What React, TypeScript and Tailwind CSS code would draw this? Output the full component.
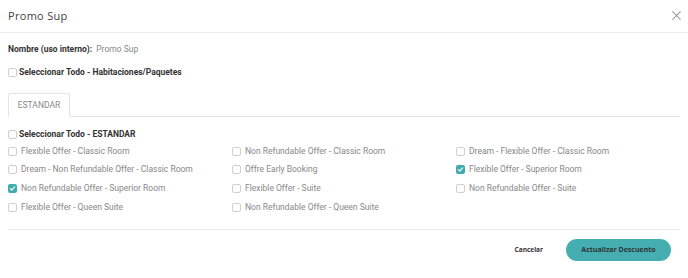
import React from 'react'

const rows: [string, boolean][] = [
  ['Flexible Offer - Classic Room', false],
  ['Non Refundable Offer - Classic Room', false],
  ['Dream - Flexible Offer - Classic Room', false],
  ['Dream - Non Refundable Offer - Classic Room', false],
  ['Offre Early Booking', false],
  ['Flexible Offer - Superior Room', true],
  ['Non Refundable Offer - Superior Room', true],
  ['Flexible Offer - Suite', false],
  ['Non Refundable Offer - Suite', false],
  ['Flexible Offer - Queen Suite', false],
  ['Non Refundable Offer - Queen Suite', false],
]

function Box({ checked }: { checked?: boolean }) {
  if (checked)
    return (
      <span className="flex h-[9px] w-[9px] shrink-0 items-center justify-center rounded-[2px] bg-[#3fadb0]">
        <svg width="7" height="7" viewBox="0 0 10 10" fill="none">
          <path d="M2 5.2l2 2 4-4.4" stroke="white" strokeWidth="1.6" strokeLinecap="round" strokeLinejoin="round" />
        </svg>
      </span>
    )
  return <span className="h-[9px] w-[9px] shrink-0 rounded-[2px] border border-[#cfcfcf] bg-white" />
}

export default function App() {
  return (
    <div className="h-[278px] w-[688px] bg-white font-['Roboto',sans-serif]">
      <div className="flex h-[33px] items-center justify-between border-b border-[#ececec] pl-2 pr-[6px]">
        <span className="font-['Open_Sans',sans-serif] text-[11px] tracking-[0.3px] text-[#444]">Promo Sup</span>
        <svg width="11" height="11" viewBox="0 0 12 12" className="mb-[1px]">
          <path d="M1.5 1.5l9 9M10.5 1.5l-9 9" stroke="#9a9a9a" strokeWidth="1.1" />
        </svg>
      </div>
      <div className="pl-2 pr-2">
        <div className="mt-[10px] flex h-[12px] items-center gap-[4px] text-[8.5px]">
          <span className="font-bold text-[#333]">Nombre (uso interno):</span>
          <span className="text-[#888]">Promo Sup</span>
        </div>
        <div className="mt-[11px] flex h-[12px] items-center gap-[2px] text-[8.5px] font-bold text-[#333]">
          <Box />
          <span>Seleccionar Todo - Habitaciones/Paquetes</span>
        </div>
        <div className="mt-[15px] flex border-b border-[#e5e5e5]">
          <div className="-mb-px flex h-[24px] w-[62px] items-center justify-center rounded-t-[3px] border border-b-white border-[#e5e5e5] bg-white text-[8.5px] text-[#888]">
            ESTANDAR
          </div>
        </div>
        <div className="mt-[11px] flex h-[12px] items-center gap-[2px] text-[8.5px] font-bold text-[#333]">
          <Box />
          <span>Seleccionar Todo - ESTANDAR</span>
        </div>
        <div className="mt-[5px] grid grid-cols-3 gap-y-[6.7px] text-[8.5px] text-[#888]">
          {rows.map(([label, checked]) => (
            <div key={label} className="flex h-[12px] items-center gap-[4px]">
              <Box checked={checked} />
              <span>{label}</span>
            </div>
          ))}
        </div>
        <div className="mt-[16px] border-t border-[#ececec]" />
        <div className="mt-[9px] mr-[9px] flex items-center justify-end gap-[23px] font-['Open_Sans',sans-serif] font-bold text-[#333]">
          <span className="text-[6.5px]">Cancelar</span>
          <span className="flex h-[22px] w-[105px] items-center justify-center rounded-full bg-[#44aeb1] text-[7px]">Actualizar Descuento</span>
        </div>
      </div>
    </div>
  )
}
